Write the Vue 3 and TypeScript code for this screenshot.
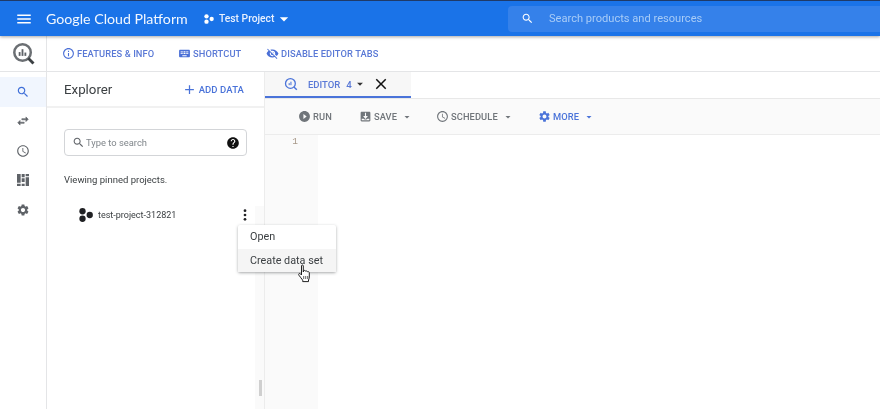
<script setup lang="ts">
const P = {
  menu: 'M3 18h18v-2H3v2zm0-5h18v-2H3v2zm0-7v2h18V6H3z',
  search: 'M15.5 14h-.79l-.28-.27C15.41 12.59 16 11.11 16 9.5 16 5.91 13.09 3 9.5 3S3 5.91 3 9.5 5.91 16 9.5 16c1.61 0 3.09-.59 4.23-1.57l.27.28v.79l5 4.99L20.49 19l-4.99-5zm-6 0C7.01 14 5 11.99 5 9.5S7.01 5 9.5 5 14 7.01 14 9.5 11.99 14 9.5 14z',
  info: 'M11 7h2v2h-2zm0 4h2v6h-2zm1-9C6.48 2 2 6.48 2 12s4.48 10 10 10 10-4.48 10-10S17.52 2 12 2zm0 18c-4.41 0-8-3.59-8-8s3.59-8 8-8 8 3.59 8 8-3.59 8-8 8z',
  keyboard: 'M20 5H4c-1.1 0-1.99.9-1.99 2L2 17c0 1.1.9 2 2 2h16c1.1 0 2-.9 2-2V7c0-1.1-.9-2-2-2zm-9 3h2v2h-2V8zm0 3h2v2h-2v-2zM8 8h2v2H8V8zm0 3h2v2H8v-2zm-1 2H5v-2h2v2zm0-3H5V8h2v2zm9 7H8v-2h8v2zm0-4h-2v-2h2v2zm0-3h-2V8h2v2zm3 3h-2v-2h2v2zm0-3h-2V8h2v2z',
  eyeOff: 'M12 7c2.76 0 5 2.24 5 5 0 .65-.13 1.26-.36 1.83l2.92 2.92c1.51-1.26 2.7-2.89 3.43-4.75-1.73-4.39-6-7.5-11-7.5-1.4 0-2.74.25-3.98.7l2.16 2.16C10.74 7.13 11.35 7 12 7zM2 4.27l2.28 2.28.46.46C3.08 8.3 1.78 10.02 1 12c1.73 4.39 6 7.5 11 7.5 1.55 0 3.03-.3 4.38-.84l.42.42L19.73 22 21 20.73 3.27 3 2 4.27zM7.53 9.8l1.55 1.55c-.05.21-.08.43-.08.65 0 1.66 1.34 3 3 3 .22 0 .44-.03.65-.08l1.55 1.55c-.67.33-1.41.53-2.2.53-2.76 0-5-2.24-5-5 0-.79.2-1.53.53-2.2zm4.31-.78l3.15 3.15.02-.16c0-1.66-1.34-3-3-3l-.17.01z',
  add: 'M19 13h-6v6h-2v-6H5v-2h6V5h2v6h6v2z',
  swap: 'M6.99 11L3 15l3.99 4v-3H14v-2H6.99v-3zM21 9l-3.99-4v3H10v2h7.01v3L21 9z',
  clock: 'M11.99 2C6.47 2 2 6.48 2 12s4.47 10 9.99 10C17.52 22 22 17.52 22 12S17.52 2 11.99 2zM12 20c-4.42 0-8-3.58-8-8s3.58-8 8-8 8 3.58 8 8-3.58 8-8 8zm.5-13H11v6l5.25 3.15.75-1.23-4.5-2.67z',
  gear: 'M19.14 12.94c.04-.3.06-.61.06-.94 0-.32-.02-.64-.07-.94l2.03-1.58c.18-.14.23-.41.12-.61l-1.92-3.32c-.12-.22-.37-.29-.59-.22l-2.39.96c-.5-.38-1.03-.7-1.62-.94l-.36-2.54c-.04-.24-.24-.41-.48-.41h-3.84c-.24 0-.43.17-.47.41l-.36 2.54c-.59.24-1.13.57-1.62.94l-2.39-.96c-.22-.08-.47 0-.59.22L2.74 8.87c-.12.21-.08.47.12.61l2.03 1.58c-.05.3-.09.63-.09.94s.02.64.07.94l-2.03 1.58c-.18.14-.23.41-.12.61l1.92 3.32c.12.22.37.29.59.22l2.39-.96c.5.38 1.03.7 1.62.94l.36 2.54c.05.24.24.41.48.41h3.84c.24 0 .44-.17.47-.41l.36-2.54c.59-.24 1.13-.56 1.62-.94l2.39.96c.22.08.47 0 .59-.22l1.92-3.32c.12-.22.07-.47-.12-.61l-2.01-1.58zM12 15.6c-1.98 0-3.6-1.62-3.6-3.6s1.62-3.6 3.6-3.6 3.6 1.62 3.6 3.6-1.62 3.6-3.6 3.6z',
  help: 'M12 2C6.48 2 2 6.48 2 12s4.48 10 10 10 10-4.48 10-10S17.52 2 12 2zm1 17h-2v-2h2v2zm2.07-7.75l-.9.92C13.45 12.9 13 13.5 13 15h-2v-.5c0-1.1.45-2.1 1.17-2.83l1.24-1.26c.37-.36.59-.86.59-1.41 0-1.1-.9-2-2-2s-2 .9-2 2H8c0-2.21 1.79-4 4-4s4 1.79 4 4c0 .88-.36 1.68-.93 2.25z',
  close: 'M19 6.41L17.59 5 12 10.59 6.41 5 5 6.41 10.59 12 5 17.59 6.41 19 12 13.41 17.59 19 19 17.59 13.41 12z',
  play: 'M12 2C6.48 2 2 6.48 2 12s4.48 10 10 10 10-4.48 10-10S17.52 2 12 2zm-2 14.5v-9l6 4.5-6 4.5z',
  save: 'M19 3H5c-1.1 0-2 .9-2 2v14c0 1.1.9 2 2 2h14c1.1 0 2-.9 2-2V5c0-1.1-.9-2-2-2zm0 16H5v-3h3.5l1.5 1.5h4l1.5-1.5H19v3zm-7-2.5L7.5 11H11V5h2v6h3.5L12 16.5z',
  caret: 'M7 10l5 5 5-5z',
}
</script>

<template>
  <div class="page">
    <header class="top">
      <svg class="ico burger" viewBox="0 0 24 24"><path :d="P.menu" /></svg>
      <span class="brand">Google Cloud Platform</span>
      <svg class="proj-ico" viewBox="0 0 12 12"><circle cx="3" cy="2.8" r="2.6" /><circle cx="3" cy="9.2" r="2.6" /><circle cx="9.2" cy="6" r="2.6" /></svg>
      <span class="proj">Test Project</span>
      <svg class="ico caret-top" viewBox="0 0 24 24"><path :d="P.caret" /></svg>
      <div class="global-search">
        <svg class="ico gs-ico" viewBox="0 0 24 24"><path :d="P.search" /></svg>
        <span>Search products and resources</span>
      </div>
    </header>

    <div class="sub">
      <div class="logo-cell">
        <svg class="logo" viewBox="0 0 24 24">
          <circle cx="11" cy="11" r="8.6" fill="none" stroke="#6b6f73" stroke-width="2.6" />
          <path d="M17 17l5.4 5.4" stroke="#3c4043" stroke-width="3" />
          <rect x="7" y="10.5" width="1.9" height="4" fill="#5f6368" /><rect x="10" y="7.5" width="1.9" height="7" fill="#5f6368" /><rect x="13" y="11" width="1.9" height="3.5" fill="#5f6368" />
        </svg>
      </div>
      <div class="sub-links">
        <a class="sub-link l1"><svg class="ico" viewBox="0 0 24 24"><path :d="P.info" /></svg>FEATURES &amp; INFO</a>
        <a class="sub-link l2"><svg class="ico" viewBox="0 0 24 24"><path :d="P.keyboard" /></svg>SHORTCUT</a>
        <a class="sub-link"><svg class="ico" viewBox="0 0 24 24"><path :d="P.eyeOff" /></svg>DISABLE EDITOR TABS</a>
      </div>
    </div>

    <div class="body">
      <nav class="rail">
        <div class="rail-item active"><svg class="ico" viewBox="0 0 24 24"><path :d="P.search" /></svg></div>
        <div class="rail-item"><svg class="ico swap" viewBox="0 0 24 24"><path :d="P.swap" /></svg></div>
        <div class="rail-item"><svg class="ico" viewBox="0 0 24 24"><path :d="P.clock" /></svg></div>
        <div class="rail-item">
          <svg class="ico dash" viewBox="0 0 24 24"><path d="M3 3h5.5v13H3zM3 17.5h5.5V21H3zM10 3h4.5v5H10zM10 9.5h4.5V15H10zM10 17.5h4.5V21H10zM16 3h5v3.5h-5zM16 8h5v13h-5z" /></svg>
        </div>
        <div class="rail-item"><svg class="ico" viewBox="0 0 24 24"><path :d="P.gear" /></svg></div>
      </nav>

      <aside class="explorer">
        <div class="ex-head">
          <h2>Explorer</h2>
          <a class="add"><svg class="ico" viewBox="0 0 24 24"><path :d="P.add" /></svg>ADD DATA</a>
        </div>
        <div class="ex-body">
          <div class="search-box">
            <svg class="ico s-ico" viewBox="0 0 24 24"><path :d="P.search" /></svg>
            <span class="ph">Type to search</span>
            <svg class="ico help" viewBox="0 0 24 24"><path :d="P.help" /></svg>
          </div>
          <p class="viewing">Viewing pinned projects.</p>
          <div class="tree-row">
            <svg class="node" viewBox="0 0 12 12"><circle cx="3" cy="2.8" r="2.7" /><circle cx="3" cy="9.2" r="2.7" /><circle cx="9.2" cy="6" r="2.7" /></svg>
            <span class="node-name">test-project-312821</span>
            <svg class="dots" viewBox="0 0 4 14"><circle cx="2" cy="2" r="1.6" /><circle cx="2" cy="7" r="1.6" /><circle cx="2" cy="12" r="1.6" /></svg>
          </div>
        </div>
        <div class="scroll-track"><div class="thumb"></div></div>
        <div class="menu">
          <div class="menu-item">Open</div>
          <div class="menu-item hover">Create data set</div>
        </div>
        <svg class="hand" viewBox="0 0 14 20">
          <path d="M4 1.8c0-1.1 1.8-1.1 1.8 0V8l.4-1.3c.9-.5 1.7-.3 1.9.5.8-.5 1.7-.2 1.9.6.8-.4 1.7 0 1.8.9v4.3c0 1.2-.3 2-.8 3v1.6H5.2v-1.4C4 14.6 2.8 13 1.4 11.2c-.8-1.2.5-2.4 1.5-1.4L4 11z" fill="#fff" stroke="#222" stroke-width="1" stroke-linejoin="round" />
          <path d="M6.2 12v3M8.2 12v3M10.2 12v3" stroke="#222" stroke-width=".7" />
        </svg>
      </aside>

      <main class="work">
        <div class="tabs">
          <div class="tab">
            <svg class="tab-logo" viewBox="0 0 24 24">
              <circle cx="11" cy="11" r="8.4" fill="none" stroke="#4a73d9" stroke-width="2.2" />
              <path d="M17 17l5 5" stroke="#4a73d9" stroke-width="2.4" />
              <rect x="8" y="10.5" width="1.8" height="3.5" fill="#4a73d9" /><rect x="11" y="8" width="1.8" height="6" fill="#4a73d9" />
            </svg>
            <span class="tab-name">EDITOR</span>
            <span class="tab-num">4</span>
            <svg class="ico tab-caret" viewBox="0 0 24 24"><path :d="P.caret" /></svg>
            <svg class="ico tab-close" viewBox="0 0 24 24"><path :d="P.close" /></svg>
          </div>
        </div>
        <div class="toolbar">
          <span class="tool run"><svg class="ico" viewBox="0 0 24 24"><path :d="P.play" /></svg>RUN</span>
          <span class="tool save"><svg class="ico" viewBox="0 0 24 24"><path :d="P.save" /></svg>SAVE<svg class="ico c" viewBox="0 0 24 24"><path :d="P.caret" /></svg></span>
          <span class="tool sched"><svg class="ico" viewBox="0 0 24 24"><path :d="P.clock" /></svg>SCHEDULE<svg class="ico c" viewBox="0 0 24 24"><path :d="P.caret" /></svg></span>
          <span class="tool more"><svg class="ico" viewBox="0 0 24 24"><path :d="P.gear" /></svg>MORE<svg class="ico c" viewBox="0 0 24 24"><path :d="P.caret" /></svg></span>
        </div>
        <div class="editor">
          <div class="gutter">1</div>
          <div class="code"></div>
        </div>
      </main>
    </div>
  </div>
</template>

<style>
html, body { margin: 0; background: #fff; overflow: hidden; }
</style>

<style scoped>
.page { width: 880px; height: 409px; display: flex; flex-direction: column; font-family: Roboto, "Liberation Sans", sans-serif; overflow: hidden; background: #fff; color: #3c4043; filter: blur(.25px); }
.ico { width: 16px; height: 16px; fill: currentColor; flex: none; display: block; }

.top { height: 35px; flex: none; border-top: 1px solid #1f3a68; background: #1a73e8; color: #fff; display: flex; align-items: center; box-shadow: 0 1px 3px rgba(0,0,0,.35); position: relative; z-index: 2; }
.burger { width: 18px; height: 18px; margin-left: 15px; }
.brand { margin-left: 13px; font-family: Lato, Roboto, sans-serif; font-size: 14.2px; width: 141px; flex: none; white-space: nowrap; color: #f2f7fe; }
.proj-ico { width: 10px; height: 10px; fill: #fff; margin-left: 17px; flex: none; }
.proj { font-size: 10.3px; font-weight: 500; margin-left: 5px; color: #e8f0fe; white-space: nowrap; width: 54px; flex: none; }
.caret-top { width: 20px; height: 20px; margin-left: 1px; }
.global-search { margin-left: 214px; flex: 1; height: 26px; background: #3581ea; border-radius: 4px 0 0 4px; display: flex; align-items: center; color: #a8ccf7; font-size: 11.1px; }
.gs-ico { width: 13px; height: 13px; color: #fff; margin: 0 15px 0 13px; }

.sub { height: 35px; flex: none; display: flex; border-bottom: 1px solid #e4e5e7; }
.logo-cell { width: 46px; border-right: 1px solid #e4e5e7; display: flex; align-items: center; justify-content: center; flex: none; }
.logo { width: 23px; height: 23px; }
.sub-links { display: flex; align-items: center; padding-left: 15px; }
.sub-link { display: flex; align-items: center; gap: 2px; color: #5a79d6; font-size: 9.3px; font-weight: 500; letter-spacing: .1px; white-space: nowrap; }
.sub-link .ico { width: 13px; height: 13px; color: #4a6fd6; }
.l1 { width: 116px; }
.l2 { width: 88px; }

.body { flex: 1; display: flex; min-height: 0; }
.rail { width: 46px; flex: none; border-right: 1px solid #e4e5e7; padding-top: 5px; color: #5f6368; }
.rail-item { height: 29.5px; display: flex; align-items: center; justify-content: center; }
.rail-item .ico { width: 14px; height: 14px; }
.rail-item .dash { width: 16px; height: 16px; }
.rail-item .swap { stroke: currentColor; stroke-width: 1; }
.rail-item.active { background: #f1f6fe; color: #3f6fd8; }

.explorer { width: 217px; flex: none; border-right: 1px solid #ececec; position: relative; }
.ex-head { height: 34px; border-bottom: 2px solid #f1f1f1; display: flex; align-items: center; justify-content: space-between; padding: 0 20px 0 17px; }
.ex-head h2 { margin: 0; font-size: 13.3px; font-weight: 400; color: #3c4043; }
.add { display: flex; align-items: center; gap: 2px; font-size: 9.5px; font-weight: 500; color: #4a73d9; letter-spacing: .1px; }
.add .ico { width: 15px; height: 15px; }
.ex-body { padding: 21px 17px 0 17px; }
.search-box { height: 25px; border: 1px solid #d3d5d8; border-radius: 4px; display: flex; align-items: center; padding: 0 6px 0 7px; }
.s-ico { width: 13px; height: 13px; color: #5f6368; }
.ph { margin-left: 1px; flex: 1; font-size: 9.4px; color: #80868b; }
.help { width: 14px; height: 14px; color: #111; }
.viewing { margin: 18px 0 0; font-size: 9.5px; color: #3c4043; line-height: 12px; }
.tree-row { margin-top: 21px; display: flex; align-items: center; height: 16px; padding-left: 15px; }
.node { width: 14px; height: 14px; fill: #202124; }
.node-name { margin-left: 5px; flex: 1; font-size: 9px; color: #3c4043; }
.dots { width: 4px; height: 12px; fill: #202124; margin-right: 0; }
.scroll-track { position: absolute; right: 0; top: 134px; bottom: 0; width: 9px; background: #fafafa; }
.thumb { position: absolute; left: 4px; top: 174px; width: 3px; height: 16px; background: #cfcfcf; }
.menu { position: absolute; left: 191px; top: 153px; width: 98px; background: #fff; box-shadow: 0 1px 3px rgba(60,64,67,.45); border-radius: 2px; z-index: 3; }
.menu-item { height: 23.5px; display: flex; align-items: center; padding-left: 12px; font-size: 10.8px; color: #3c4043; }
.menu-item.hover { background: #f5f5f5; }
.hand { position: absolute; left: 250px; top: 192px; width: 15px; height: 20px; z-index: 4; }

.work { flex: 1; min-width: 0; display: flex; flex-direction: column; }
.tabs { height: 26px; flex: none; border-bottom: 1px solid #e8e8e8; display: flex; }
.tab { height: 24px; border-bottom: 2px solid #4a73d9; background: #f7f7f7; display: flex; align-items: center; padding-left: 19px; width: 127px; color: #5a79d6; }
.tab-logo { width: 14px; height: 14px; flex: none; }
.tab-name { margin-left: 10px; font-size: 9.5px; font-weight: 500; }
.tab-num { margin-left: 6px; font-size: 9.7px; font-weight: 500; }
.tab-caret { width: 14px; height: 14px; color: #333; margin-left: 1px; }
.tab-close { width: 18px; height: 18px; color: #111; margin-left: 5px; }
.toolbar { height: 35px; flex: none; background: #fafafa; border-bottom: 1px solid #ececec; display: flex; align-items: center; color: #70757a; font-size: 9.3px; font-weight: 500; }
.tool { display: flex; align-items: center; gap: 2px; white-space: nowrap; letter-spacing: .1px; }
.tool .ico { width: 13px; height: 13px; }
.tool .c { width: 12px; height: 12px; margin-left: 2px; }
.run { margin-left: 33px; width: 61px; }
.save { width: 77px; }
.sched { width: 102px; }
.more { color: #4a73d9; }
.editor { flex: 1; display: flex; min-height: 0; }
.gutter { width: 33px; padding-right: 20px; background: #fafafa; text-align: right; font-size: 9.5px; color: #a8998a; padding-top: 1px; font-family: "Liberation Mono", monospace; }
.code { flex: 1; background: #fff; }
</style>
